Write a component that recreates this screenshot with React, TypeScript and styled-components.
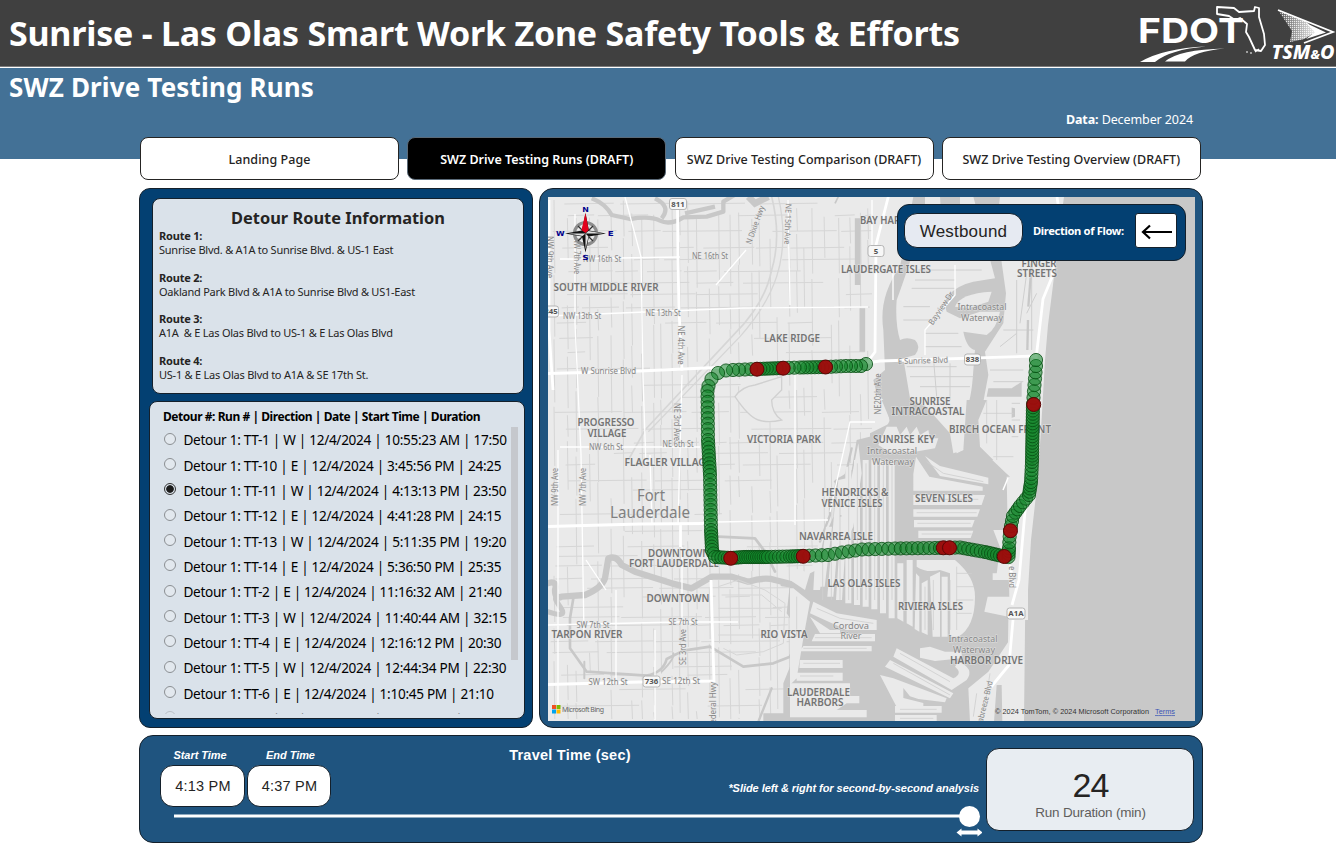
import React from "react";
import styled, { createGlobalStyle, css } from "styled-components";

const Global = createGlobalStyle`
  * { box-sizing: border-box; }
  html, body { margin: 0; padding: 0; background: #fff; overflow: hidden; }
  body { font-family: "Noto Sans", "Open Sans", sans-serif; color: #252423; }
`;

const Page = styled.div`
  width: 1336px;
  height: 845px;
  overflow: hidden;
`;

const TitleBar = styled.header`
  display: flex;
  align-items: center;
  justify-content: space-between;
  height: 68px;
  padding: 0 0 1px 9px;
  background: #404040;
  border-bottom: 1px solid #fff;
  box-shadow: inset 0 -1px 0 #7c7c7c;
`;

const Title = styled.h1`
  margin: 0;
  color: #fff;
  font: 700 34px/48px "Noto Sans", sans-serif;
  letter-spacing: -0.23px;
  white-space: nowrap;
`;

const Band = styled.section`
  display: flex;
  justify-content: space-between;
  height: 91px;
  padding: 0 143px 0 9px;
  background: #437196;
  color: #fff;
`;

const Subtitle = styled.h2`
  margin: 0;
  font: 700 26px/39px "Noto Sans", sans-serif;
  letter-spacing: 0.15px;
`;

const DataNote = styled.div`
  padding-top: 42px;
  font-size: 12.5px;
  line-height: 20px;
  letter-spacing: -0.1px;
`;

const Nav = styled.nav`
  display: flex;
  gap: 8.25px;
  margin: -22px 0 0 140px;
`;

const NavButton = styled.button<{ $active?: boolean }>`
  width: 259px;
  height: 43px;
  padding: 1px 0 0;
  border: 1.5px solid ${(p) => (p.$active ? "#5b6a78" : "#252423")};
  border-radius: 8px;
  background: ${(p) => (p.$active ? "#000" : "#fff")};
  color: ${(p) => (p.$active ? "#fff" : "#252423")};
  font: ${(p) => (p.$active ? 600 : 500)} 12.5px "Noto Sans", sans-serif;
  letter-spacing: ${(p) => (p.$active ? 0 : 0.05)}px;
  white-space: nowrap;
`;

const Main = styled.main`
  display: grid;
  grid-template-columns: 394px 664px;
  column-gap: 6px;
  row-gap: 7px;
  margin: 8px 0 0 139px;
`;

const frame = css`
  border: 1px solid #14202b;
`;

const SidePanel = styled.section`
  ${frame}
  display: flex;
  flex-direction: column;
  gap: 7px;
  height: 540px;
  padding: 9px 8px 8px 9px;
  border-radius: 11px;
  background: #034072;
`;

const InfoCard = styled.article`
  ${frame}
  height: 196px;
  margin: 0 0 0 3px;
  padding: 7px 6px;
  border-radius: 8px;
  background: #dae2ea;
`;

const InfoTitle = styled.h3`
  margin: 0 0 -1px;
  font: 700 16.4px/24px "Noto Sans", sans-serif;
  text-align: center;
`;

const Route = styled.p`
  margin: 0 0 13.1px;
  font-size: 11px;
  line-height: 14.2px;
  letter-spacing: -0.24px;
  white-space: pre;
  b { display: block; letter-spacing: -0.2px; }
`;

const ListCard = styled.article`
  ${frame}
  flex: 1;
  min-height: 0;
  margin-right: -1px;
  padding: 6px 6px 4px 13px;
  border-radius: 8px;
  background: #dae2ea;
  color: #000;
`;

const ListTitle = styled.h4`
  margin: 0 0 1px;
  font: 700 12px/18px "Noto Sans", sans-serif;
  letter-spacing: -0.45px;
  white-space: nowrap;
`;

const RunArea = styled.div`
  display: flex;
  justify-content: space-between;
  height: 287px;
  overflow: hidden;
`;

const Runs = styled.ul`
  margin: 0;
  padding: 0 0 0 1px;
  list-style: none;
`;

const Run = styled.li<{ $faded?: boolean }>`
  display: flex;
  align-items: center;
  gap: 7.5px;
  height: 25.35px;
  font-size: 13.6px;
  letter-spacing: -0.3px;
  white-space: nowrap;
  opacity: ${(p) => (p.$faded ? 0.4 : 1)};
`;

const Radio = styled.i<{ $on?: boolean }>`
  width: 12px;
  height: 12px;
  margin-top: -2px;
  flex: none;
  border: 1px solid ${(p) => (p.$on ? "#333" : "#8b8f93")};
  border-radius: 50%;
  background: ${(p) => (p.$on ? "radial-gradient(#1b1b1b 0 3.4px, #dae2ea 4.2px)" : "#e2e8ee")};
`;

const Thumb = styled.div`
  width: 7px;
  height: 233px;
  background: #c5c8cd;
`;

const MapPanel = styled.section`
  ${frame}
  position: relative;
  height: 540px;
  padding: 8px 7px 7px 8px;
  border-radius: 14px;
  background: #1f547f;
`;

const MapSvg = styled.svg`
  display: block;
  width: 647px;
  height: 524px;
  font-family: "Noto Sans", sans-serif;
`;

const FlowCard = styled.div`
  ${frame}
  position: absolute;
  top: 15px;
  left: 357px;
  display: flex;
  align-items: center;
  width: 289px;
  height: 57px;
  padding: 0 8px 4px 6px;
  border-radius: 12px;
  background: #034072;
`;

const FlowValue = styled.div`
  ${frame}
  width: 119px;
  height: 35px;
  border-radius: 13px;
  background: #e6eaf2;
  font: 17px/35px "Liberation Sans", sans-serif;
  letter-spacing: 0.2px;
  text-align: center;
`;

const FlowLabel = styled.div`
  flex: 1;
  padding-left: 10px;
  color: #fff;
  font: 700 11.2px "Noto Sans", sans-serif;
  letter-spacing: -0.36px;
  white-space: nowrap;
`;

const ArrowBox = styled.div`
  ${frame}
  display: grid;
  place-items: center;
  width: 42px;
  height: 35px;
  border-radius: 3px;
  background: #fff;
`;

const TimePanel = styled.section`
  ${frame}
  grid-column: 1 / 3;
  display: flex;
  justify-content: space-between;
  height: 108px;
  padding: 12px 8px 0 20px;
  border-radius: 14px;
  background: #1f547f;
  font-family: "Liberation Sans", sans-serif;
`;

const TimeLeft = styled.div`
  width: 822px;
`;

const TimeRow = styled.div`
  display: flex;
  gap: 2px;
  height: 58px;
`;

const TimeField = styled.label<{ $width: number; $start?: number; $end?: number }>`
  width: ${(p) => p.$width}px;
  color: #fff;
  font: italic 700 11px/14px "Liberation Sans", sans-serif;
  text-align: center;
  letter-spacing: -0.05px;
  b { display: block; padding: 0 ${(p) => p.$end ?? 0}px 0 ${(p) => p.$start ?? 0}px; }
  span {
    ${frame}
    display: block;
    height: 42px;
    margin-top: 3px;
    padding-left: 1px;
    border-radius: 13px;
    background: #fff;
    color: #252423;
    font: 400 14.5px/40px "Liberation Sans", sans-serif;
    letter-spacing: 0.25px;
  }
`;

const TimeHeading = styled.div`
  width: 240px;
  margin-left: 117px;
  color: #fff;
  font-weight: 700;
  font-size: 14.5px;
  line-height: 14px;
  text-align: center;
  letter-spacing: 0.25px;
`;

const Hint = styled.div`
  align-self: flex-end;
  margin: 0 3px 11px auto;
  color: #fff;
  font: italic 700 11px/14px "Liberation Sans", sans-serif;
  letter-spacing: -0.05px;
  white-space: nowrap;
`;

const Slider = styled.svg`
  display: block;
  width: 822px;
  height: 36px;
`;

const Duration = styled.div`
  ${frame}
  width: 208px;
  height: 83px;
  padding: 18px 0 0 1px;
  border-radius: 13px;
  background: #e8edf2;
  text-align: center;
  strong { display: block; font-weight: 400; font-size: 34px; line-height: 36px; letter-spacing: -1px; }
  span { display: block; color: #605e5c; font-size: 13.5px; line-height: 19px; letter-spacing: -0.2px; }
`;

const Logo = styled.svg`
  width: 206px;
  height: 66px;
  margin-top: 1px;
`;

/* ---------- map data ---------- */

const WATER = "#c8c8c8";
const LAND = "#eaeaea";
const MINOR = "#d6d6d6";

const Tile = ({ x, y, children }: { x: number; y: number; children: React.ReactNode }) => (
  <g transform={`translate(${x} ${y}) scale(.33333)`}>{children}</g>
);

type Label = [text: string, x: number, y: number, width: number, rotate?: number];

const areas: Label[] = [
  ["SOUTH MIDDLE RIVER", 606, 287, 105],
  ["LAKE RIDGE", 792, 338, 56],
  ["PROGRESSO", 606, 422, 57],
  ["VILLAGE", 607, 433, 39],
  ["VICTORIA PARK", 784, 439, 74],
  ["FLAGLER VILLAGE", 668, 462, 87],
  ["BAY HARBOR", 890, 220, 60],
  ["LAUDERGATE ISLES", 886, 269, 90],
  ["FINGER", 1039, 263, 35],
  ["STREETS", 1037, 273, 40],
  ["SUNRISE", 930, 401, 41],
  ["INTRACOASTAL", 928, 411.5, 73],
  ["BIRCH OCEAN FRONT", 1000, 429.5, 102],
  ["SUNRISE KEY", 904, 439.5, 62],
  ["HENDRICKS &", 855, 492.5, 67],
  ["VENICE ISLES", 852, 503, 61],
  ["SEVEN ISLES", 944, 498, 58],
  ["NAVARREA ISLE", 836, 536, 74],
  ["DOWNTOWN", 679, 553, 62],
  ["FORT LAUDERDALE", 674, 563.5, 90],
  ["DOWNTOWN", 678, 598, 63],
  ["LAS OLAS ISLES", 864, 583.5, 73],
  ["RIVIERA ISLES", 930.5, 606.5, 65],
  ["RIO VISTA", 784, 634, 47],
  ["TARPON RIVER", 587, 634, 71],
  ["HARBOR DRIVE", 986.5, 660, 73],
  ["LAUDERDALE", 818.5, 692, 63],
  ["HARBORS", 820, 702.5, 47],
];

const waters: Label[] = [
  ["Intracoastal", 982, 307, 49],
  ["Waterway", 982, 317.5, 42],
  ["Intracoastal", 892, 451, 50],
  ["Waterway", 893, 462, 42],
  ["Cordova", 851, 625.5, 36],
  ["River", 851, 636, 21],
  ["Intracoastal", 973, 639, 49],
  ["Waterway", 974, 650, 42],
];

const streets: Label[] = [
  ["NW 16th St", 602, 259.5, 38],
  ["NE 16th St", 710, 256, 36],
  ["NW 13th St", 582, 316.5, 38],
  ["NE 13th St", 663, 313.5, 35],
  ["W Sunrise Blvd", 608.5, 371.5, 55],
  ["E Sunrise Blvd", 923, 360.5, 50, -2],
  ["NW 6th St", 606, 447.5, 34],
  ["NE 6th St", 678, 444.5, 31],
  ["SW 7th St", 593, 625, 33],
  ["SE 7th St", 683, 622.5, 29],
  ["SW 12th St", 608, 682.5, 39],
  ["SE 12th St", 681, 681, 38],
  ["NE 4th Ave", 680.5, 345, 39, 90],
  ["NE 3rd Ave", 677, 422, 38, 90],
  ["NE 15th Ave", 788, 224, 41, 92],
  ["N Dixie Hwy", 755, 225, 40, -70],
  ["NW 7th Ave", 577, 256, 36, 90],
  ["NW 9th Ave", 549.5, 257, 42, 90],
  ["NW 9th Ave", 555.5, 487, 38, -90],
  ["NW 7th Ave", 583.5, 487, 38, -90],
  ["SE 3rd Ave", 683, 647, 36, -90],
  ["Federal Hwy", 713, 705, 46, -90],
  ["NE20th Ave", 878, 394, 41, -90],
  ["Bayview Dr", 941, 308, 38, -56],
  ["e Blvd", 1012, 577, 22, 90],
  ["Seabreeze Blvd", 984, 705, 50, -76],
];

const MapText = ({ items, size, bold, fill }: { items: Label[]; size: number; bold?: boolean; fill: string }) => (
  <g fontSize={size} fontWeight={bold ? 600 : 400} fill={fill} textAnchor="middle"
     stroke="#eaeaea" strokeWidth={bold ? 1.2 : 1} strokeOpacity={0.75} paintOrder="stroke">
    {items.map(([t, x, y, w, r], i) => (
      <text key={i} transform={`translate(${x} ${y}) rotate(${r ?? 0})`} dy=".36em"
            textLength={w} lengthAdjust="spacingAndGlyphs">{t}</text>
    ))}
  </g>
);

const Shield = ({ x, y, w, label }: { x: number; y: number; w: number; label: string }) => (
  <g>
    <rect x={x - w / 2} y={y - 5.5} width={w} height={11} rx={2.5} fill="#f7f7f7" stroke="#b5b5b5" />
    <text x={x} y={y + 2.8} fontSize={7.8} fontWeight={700} fill="#555" textAnchor="middle">{label}</text>
  </g>
);

/* Small residential streets, broken into blocks of uneven length. */
const blocks = (() => {
  let seed = 7;
  const rnd = () => ((seed = (seed * 16807) % 2147483647) / 2147483647);
  let d = "";
  for (let x = 554; x < 872; x += 7 + rnd() * 7) {
    let y = 200 + rnd() * 20;
    while (y < 718) {
      const len = 18 + rnd() * 60;
      if (rnd() > 0.25) d += `M${x.toFixed(1)} ${y.toFixed(1)}l.8 ${Math.min(len, 719 - y).toFixed(1)}`;
      y += len + rnd() * 8;
    }
  }
  for (let y = 204; y < 716; y += 8 + rnd() * 9) {
    let x = 549 + rnd() * 20;
    while (x < 868) {
      const len = 16 + rnd() * 65;
      if (rnd() > 0.35) d += `M${x.toFixed(1)} ${y.toFixed(1)}l${Math.min(len, 872 - x).toFixed(1)} -.8`;
      x += len + rnd() * 12;
    }
  }
  return d;
})();

/* Drive path: [x, y, distance between samples up to this vertex]. */
const drive: [number, number, number][] = [
  [866, 364, 0], [861, 366, 5.6], [846, 366, 5], [826, 367, 4.8], [800, 367.5, 3.6], [783, 368, 5],
  [757, 369, 3.4], [733, 370, 5.6], [726, 370.5, 6.5], [718, 373, 7.4], [711.5, 379, 7], [708.5, 386, 7], [707.5, 391, 5], [708, 440, 5.2],
  [710, 475, 3.8], [711, 530, 5], [712, 550, 3.6], [715, 557, 3.6], [731, 558, 3.2], [744, 557, 2.6],
  [768, 557, 2.2], [790, 556.5, 3.4], [803, 556, 2.5], [828, 555, 6.4], [842, 552.5, 6.4], [862, 549.5, 6.4],
  [895, 548.5, 7], [935, 548, 5.6], [960, 547.5, 5], [985, 552, 4], [1000, 555.5, 3.4], [1008.5, 557, 3],
  [1009, 548, 3.6], [1010, 531, 5], [1013, 516, 4.8], [1020, 506, 4.6], [1029, 495, 4.4], [1031, 482, 3.6],
  [1032, 462, 4], [1033, 404, 3.2], [1034.5, 385, 6], [1036, 366, 6.3], [1036, 360, 6],
];

const samples = drive.slice(1).flatMap(([x, y, step], i) => {
  const [px, py] = drive[i];
  const n = Math.max(1, Math.round(Math.hypot(x - px, y - py) / step));
  return Array.from({ length: n }, (_, k) => [px + ((x - px) * (k + 1)) / n, py + ((y - py) * (k + 1)) / n]);
});

const stops = [
  [757, 369.2], [783.2, 368.2], [825.5, 367], [1033.7, 404.5], [1010.5, 530.7], [1004.3, 556.5],
  [943.3, 547.8], [949.5, 547.8], [803.2, 556.3], [730.7, 558.3],
];

const Compass = () => (
  <g>
    <circle cx="585.5" cy="233.5" r="11" fill="none" stroke="#8d8d8d" strokeWidth="3.2" />
    <path d="M578 226l15 15M593 226l-15 15" stroke="#333" strokeWidth="1.3" />
    <path d="M585.5 213l3.5 17.5 17 3-17 3-3.5 16-3.5-16-17-3 17-3z" fill="#111" />
    <path d="M585.5 213v20l-4-3z M585.5 213l3.2 17-3.2 3z" fill="#e3001b" />
    <path d="M585.5 233.5h-17l14 2.5zM585.5 233.5v16l3-13zM585.5 233.5h18l-15-2.6z" fill="#ddd" />
    <g fill="#00008b" fontSize="7" fontWeight="900" fontFamily="DejaVu Sans">
      <text x="582.3" y="211.5" textLength="6.6" lengthAdjust="spacingAndGlyphs">N</text>
      <text x="556" y="236" textLength="8.6" lengthAdjust="spacingAndGlyphs">W</text>
      <text x="607.8" y="236" textLength="6" lengthAdjust="spacingAndGlyphs">E</text>
      <text x="582.3" y="259.5" textLength="6.4" lengthAdjust="spacingAndGlyphs">S</text>
    </g>
  </g>
);

const MapView = () => (
  <MapSvg viewBox="548 197 647 524">
    <rect x="548" y="197" width="647" height="524" fill={LAND} />
    <path d={blocks} fill="none" stroke={MINOR} strokeWidth="1" />

    {/* northwest rivers, rail line and lake */}
    <Tile x={545} y={190}>
      <g fill="none" stroke={WATER}>
        <path d="M140 25q40 15 60 50l55 12q60-10 90 5t70-10l70-2 50-15 0-30 50-30M330 25q50 25 20 60M420 70l90-20" strokeWidth="13" strokeLinejoin="round" />
        <path d="M610 20l20 20 40-20" strokeWidth="20" />
        <path d="M938 85v200M952 355v130" strokeWidth="17" />
        <path d="M870 40l10-20" strokeWidth="5" />
      </g>
      <path d="M570 620q20-30 60-35l80-25v40l-30 30q0 40 30 60-40 10-70 0t-70-70z" fill={LAND} stroke="#d0d0d0" strokeWidth="4" />
      <path d="M680 20q30 120 0 220-20 100-110 190L300 720 250 810" fill="none" stroke={MINOR} strokeWidth="5" />
      <path d="M700 20q30 130-5 240-30 90-110 180L310 725" fill="none" stroke={MINOR} strokeWidth="4" />
    </Tile>

    {/* New River and Tarpon River */}
    <Tile x={545} y={455}>
      <g fill="none" stroke={WATER} strokeLinejoin="round" strokeLinecap="round">
        <path d="M8 385q30-10 22 20 0 30 20 20l70-5q50-20 60-50l10-60q25-10 40 20l40 20 110 35 60 15 60-35 60 0 50 15q50-15 80-5l60 15 50 40" strokeWidth="19" />
        <path d="M8 470q60 20 40-10t-15-30" strokeWidth="16" />
        <path d="M520 245l110 5 30 40 30 60M85 430l-10 60 0 90 50 70 180 12q50-10 60-50l50-25 80-12 50 30 50 30 90-10 50-20 30-60 8-140" strokeWidth="8" />
        <path d="M350 650q40-40 35-55M118 620v50" strokeWidth="6" />
        <path d="M780 400l-70-10M640 800l40-100M870 80l30-10 20-90M855 130l0 50-30 80" strokeWidth="7" />
      </g>
      <g fill="none" stroke={MINOR} strokeWidth="3">
        <path d="M520 395l60-20 80 30 60 40-5 120-60 25-80 10-40-20M530 420l120 0 60 50M520 460h190M520 540h180" />
      </g>
    </Tile>

    {/* Intracoastal channel north of Sunrise Blvd */}
    <Tile x={870} y={190}>
      <path d="M130 20h80v70l-30 50q0 100-60 140-40 60-10 120l60 30-10 80q40 30 20 90l60 20 60 20 60 60 30 50v60H0v-80l60-30-10-60-30-30-10-40 35-30-5-120q-15-100 50-190z" fill={WATER} />
      <path d="M165 20L165 60 150 130 120 215Q95 290 80 330 75 400 90 450q20-10 45 0 20 20 0 45l-35 10 20 120q50 30 110 45l30 120q10 25 40 20l20-140 10-160-50-70 90 10 10-200V20z" fill={LAND} />
      <path d="M210 20h60v130l-50 30zM310 20h80l-10 90 28 200-8 90-55 85 10 70-15 80 95 20v25l-95 30-35 100-25 10 5-150q20-40 25-130l5-60q-25-5-35-55l70 10q30-20 40-70l-60 0-60 20-40-20q-10-30 5-50 30-30 75-40l65-10z" fill={WATER} />
      <path d="M255 350q15-40 110-45l-10 30-60 20z" fill={LAND} />
      <g fill="none" stroke="#cfcfcf" strokeWidth="3">
        <path d="M145 240h190M135 270h120M125 295h130M100 350h80M100 390h90M165 430h100M165 470h110M110 530h150M120 560h190M150 590h150M190 500l10 120M240 520v140" />
        <path d="M440 270v220M470 250l-20 150M485 250v230M500 310l-30 60M400 420h90M390 470l50-40M360 540h100M370 575h90M330 640h120M340 690h110M335 740h110M390 630v180M420 630v180" />
      </g>
      <path d="M485 220l-10 130M474 390l-2 90" stroke={WATER} strokeWidth="7" />
      <path d="M355 595h70l30-20v45H350z" fill={WATER} />
    </Tile>

    {/* Las Olas canals and the harbour */}
    <Tile x={790} y={400}>
      <path d="M275 0l25 60-20 40-80 20-15 90-50 30-5 110-30 70-20 90-80 40-10 90 40 60-10 50-40 100 0 90-60 0v30h1000V660H850l-180 0V240L565 140 600 0H480l40 150-30 15-20-90-70-60-100-15z" fill={WATER} />
      <path d="M590 0l-25 60 5 80 80 80 15 10V0zM490 160l-10-60-90-100h140l-10 150z" fill={LAND} />
      <g fill={LAND}>
        <path d="M320 80l10 25 20-25 10 25 20-25 10 25 25-15 5 25 25 0-10 30-60 10h-80l-30-20 25-55z" />
        <path d="M205 130l10 90-25 160-30 60h-20l45-210zM145 240l25-5v110h-35zM140 350l35 0-10 80-25 0z" />
        {Array.from({ length: 9 }, (_, i) => {
          const x = 88 + i * 26;
          const top = [380, 320, 260, 200, 180][i] ?? 180;
          const bottom = [560, 590, 600, 610, 615, 620, 628, 640, 655][i];
          return <path key={i} d={`M${x + (i < 3 ? 20 : 0)} ${top}h18l${i < 3 ? -22 : 0} ${bottom - top}h-18z`} />;
        })}
        <path d="M378 170l40 60 160 30v12H370v-50zM405 168l45 30 145 35v20L450 228zM370 285h215l-10 30H370zM370 328h200l-8 22H370zM372 360h182l-8 22H372zM385 392h165l-8 22H385z" />
        <path d="M322 490h18v175l-18-10zM350 480h18v200l-18-10zM378 520l10 10v165l-14-8zM395 550l18-10v165l-18-8zM420 530l30-15v195h-22zM455 530h18v180h-18z" />
        <path d="M380 480h115q60 50 60 110 0 90-50 120h-25V520l-30-10q-40 10-70-10z" />
        <path d="M0 500l60 20-15 50-45-30zM75 480l30-10-15 100-20 0z" />
        <path d="M10 565l50 40-20 110-20 120-20 20V565zM70 605l70 35 120 20v30H170l-110-50zM60 650l60 40 30 0v10H90zM75 702h180v22H65zM40 738h205v16H30zM30 780h128v24H28zM20 818h138v24H20z" />
        <path d="M0 850h180v38h28v22H170l-30 20h90v22H0z" />
        <path d="M390 745l30-5 45 15h50v20l-80 8-45-10zM320 745l170 90q30-15 5-35l10-15q50 20 25 55l-45 30L310 770zM300 780l190 100-10 15-195-95zM270 825l40 10 160 60-5 12-80-10-25-8-20-25v30l60 15v12h-80z" />
        <path d="M315 918h140v20H315zM315 945h125v20H315z" />
        <path d="M610 390l40 0v60l-30 0v35h50V420l-10-30v500l-10 75H540l-5-100 60-50 60-90v-75l-72-15 10-45h65v-50h-50v-20h50V522l-38 0 10-80z" />
        <path d="M650 230h60l-8 735H600l50-150 10-220-5-120z" />
      </g>
      <g fill="none" stroke="#cfcfcf" strokeWidth="2.5">
        {Array.from({ length: 9 }, (_, i) => <path key={i} d={`M${98 + i * 26} ${[450, 400, 300, 200, 190][i] ?? 190}V600`} />)}
        <path d="M380 298h185M380 338h180M382 370h160M395 402h150M410 185l50 35 120 25M500 500v190M500 520h45M500 560h52M500 600h50M500 640h45M430 540v150M405 560v130M480 540v150" />
        <path d="M80 625l70 30 100 15M75 713h170M40 745h190M40 790h110M30 828h100M10 870h150M330 760l150 85M310 790l170 95M20 590v120M330 928h110M330 955h100M560 880l-10 70M600 820l-20 130M640 420v40M590 0v130M620 0v180M580 40h90M580 90h100M610 170h60" />
      </g>
      <path d="M620 855h15l2 110h-25z" fill={WATER} />
    </Tile>

    {/* Atlantic */}
    <path d="M1064 197L1060 225 1053 285 1048 325 1045 360 1041 430 1039 460 1036 495 1031 540 1028 590 1028 640 1025.5 721H1195V197z" fill={WATER} />

    {/* arterial roads */}
    <g fill="none" stroke="#fff" strokeLinejoin="round">
      <path d="M548 373.5L640 371 705 368 760 366 866 363 880 361 1035 356M677.5 208L678 260 679 310 682 371M549 200V330l4 60M890 190L876 245 875 352 866 364M1057 197l3 20-8 60-9 22-7 60M548 526.5L640 524 705 523.5M711 580L714 682M548 684.5L640 682 714 681M680.5 525V547M1026 500l-7 80-7 25M1010 565l4 22M1013 620l-4 45-18 22" strokeWidth="2.8" />
      <path d="M575 214v110l6 130 3 180M788 200l2 105M548 316l195-8 125-1M625 197l16 60 2 120 3 90M560 447h140M650 455l2 70M682 375l-4 150M560 259l120-2M716 522l112-2M795 360v165M875 422h-25l-20 90M548 625l130-3h60M616 590v90M655 630v90M682 547v75M872 250v-50M955 265v30l-30 35v25M893 300l0-30M716 285l30-35M586 560l20 30M558 450v260" strokeWidth="1.3" />
      <path d="M985 559h30M1008 478l-5 12" strokeWidth="1.5" />
    </g>

    <MapText items={streets} size={8.2} fill="#868686" />
    <MapText items={waters} size={9.4} fill="#858585" />
    <MapText items={areas} size={10} bold fill="#747474" />
    <MapText items={[["Fort", 651, 495.5, 28], ["Lauderdale", 650, 512.5, 80]]} size={15.5} fill="#808080" />

    <Shield x={678} y={204} w={17} label="811" />
    <Shield x={876} y={251} w={16} label="5" />
    <Shield x={551} y={311.5} w={15} label="845" />
    <Shield x={972.5} y={359.5} w={16} label="838" />
    <Shield x={651.5} y={681.5} w={17} label="736" />
    <Shield x={1016} y={613.5} w={18} label="A1A" />

    <g fill="#12852a" fillOpacity="0.55" stroke="#064d12" strokeOpacity="0.8" strokeWidth="1">
      <circle cx="866" cy="364" r="6.6" />
      {samples.map(([x, y], i) => <circle key={i} cx={x} cy={y} r="6.6" />)}
    </g>
    <g fill="#a4070b" fillOpacity="0.93" stroke="#5a0606" strokeWidth="1">
      {stops.map(([x, y], i) => <circle key={i} cx={x} cy={y} r="7" />)}
    </g>

    <Compass />

    <rect x="552" y="705" width="4" height="4" fill="#f25022" />
    <rect x="556.5" y="705" width="4" height="4" fill="#7fba00" />
    <rect x="552" y="709.5" width="4" height="4" fill="#00a4ef" />
    <rect x="556.5" y="709.5" width="4" height="4" fill="#ffb900" />
    <text x="562" y="711.5" fontSize="7" fill="#666" textLength="42">Microsoft Bing</text>
    <g fontFamily="Liberation Sans" fontSize="7.3">
      <text x="995" y="714.3" fill="#333" textLength="154">© 2024 TomTom, © 2024 Microsoft Corporation</text>
      <text x="1155" y="714.3" fill="#3a55b5" textLength="20" textDecoration="underline">Terms</text>
    </g>
  </MapSvg>
);

const Logos = () => (
  <Logo viewBox="1130 0 206 66">
    <defs>
      <pattern id="dots" width="2" height="2" patternUnits="userSpaceOnUse">
        <rect width="1.2" height="1.2" fill="#ddd" />
      </pattern>
      <linearGradient id="fade" x1="0" x2="1">
        <stop offset="0" stopColor="#fff" stopOpacity="0.05" />
        <stop offset="1" stopColor="#fff" stopOpacity="0.9" />
      </linearGradient>
    </defs>
    <text x="1138" y="42" fill="#fff" fontFamily="Inter" fontWeight="700" fontSize="34" textLength="106" lengthAdjust="spacingAndGlyphs">FDOT</text>
    <path d="M1140 61q24-14 66-15.5-36 3-51 15.5zM1165 60.5q14-12 60-13-32 3-40 13z" fill="#fff" />
    <path d="M1217 6l17 1 5 4 15-1 1-4 4 1v9l5 17 1 11-4 6-6-1-6-13-3-5 1-8-7-6-5 2-6-4-12-2z" fill="none" stroke="#fff" strokeWidth="1.8" strokeLinejoin="round" />
    <path d="M1246 51h2M1250 52h2M1255 51l4-3" stroke="#fff" strokeWidth="1.2" />
    <path d="M1278 9l28 11 10 11-12 7-14 3 2-11z" fill="url(#dots)" />
    <path d="M1278 9l28 11 10 11-12 7-14 3 2-11z" fill="url(#fade)" />
    <path d="M1306 38l20-6.5-20-9.5 9 9z" fill="#fff" />
    <path d="M1278 9l55 22-29 11" fill="none" stroke="#fff" strokeWidth="1.8" />
    <text x="1271.5" y="58" fill="#fff" fontFamily="Noto Sans" fontStyle="italic" fontWeight="800" fontSize="19.5" textLength="63" lengthAdjust="spacingAndGlyphs">
      TSM<tspan fontSize="13">&amp;</tspan>O
    </text>
  </Logo>
);

const routes = [
  ["Route 1:", "Sunrise Blvd. & A1A to Sunrise Blvd. & US-1 East"],
  ["Route 2:", "Oakland Park Blvd & A1A to Sunrise Blvd & US1-East"],
  ["Route 3:", "A1A  & E Las Olas Blvd to US-1 & E Las Olas Blvd"],
  ["Route 4:", "US-1 & E Las Olas Blvd to A1A & SE 17th St."],
];

const runs = [
  "TT-1 | W | 12/4/2024 | 10:55:23 AM | 17:50",
  "TT-10 | E | 12/4/2024 | 3:45:56 PM | 24:25",
  "TT-11 | W | 12/4/2024 | 4:13:13 PM | 23:50",
  "TT-12 | E | 12/4/2024 | 4:41:28 PM | 24:15",
  "TT-13 | W | 12/4/2024 | 5:11:35 PM | 19:20",
  "TT-14 | E | 12/4/2024 | 5:36:50 PM | 25:35",
  "TT-2 | E | 12/4/2024 | 11:16:32 AM | 21:40",
  "TT-3 | W | 12/4/2024 | 11:40:44 AM | 32:15",
  "TT-4 | E | 12/4/2024 | 12:16:12 PM | 20:30",
  "TT-5 | W | 12/4/2024 | 12:44:34 PM | 22:30",
  "TT-6 | E | 12/4/2024 | 1:10:45 PM | 21:10",
  "TT-7 | W | 12/4/2024 | 1:37:43 PM | 17:20",
];

export default function App() {
  return (
    <Page>
      <Global />
      <TitleBar>
        <Title>Sunrise - Las Olas Smart Work Zone Safety Tools &amp; Efforts</Title>
        <Logos />
      </TitleBar>
      <Band>
        <Subtitle>SWZ Drive Testing Runs</Subtitle>
        <DataNote><b>Data:</b> December 2024</DataNote>
      </Band>
      <Nav>
        <NavButton>Landing Page</NavButton>
        <NavButton $active>SWZ Drive Testing Runs (DRAFT)</NavButton>
        <NavButton>SWZ Drive Testing Comparison (DRAFT)</NavButton>
        <NavButton>SWZ Drive Testing Overview (DRAFT)</NavButton>
      </Nav>
      <Main>
        <SidePanel>
          <InfoCard>
            <InfoTitle>Detour Route Information</InfoTitle>
            {routes.map(([name, text]) => (
              <Route key={name}><b>{name}</b>{text}</Route>
            ))}
          </InfoCard>
          <ListCard>
            <ListTitle>Detour #: Run # | Direction | Date | Start Time | Duration</ListTitle>
            <RunArea>
              <Runs>
                {runs.map((r, i) => (
                  <Run key={r} $faded={i === 11}>
                    <Radio $on={i === 2} />
                    Detour 1: {r}
                  </Run>
                ))}
              </Runs>
              <Thumb />
            </RunArea>
          </ListCard>
        </SidePanel>
        <MapPanel>
          <MapView />
          <FlowCard>
            <FlowValue>Westbound</FlowValue>
            <FlowLabel>Direction of Flow:</FlowLabel>
            <ArrowBox>
              <svg width="34" height="20" viewBox="0 0 34 20">
                <path d="M33 11H4.500M11 4.500L4 11l7 6.500" fill="none" stroke="#000" strokeWidth="2.2" />
              </svg>
            </ArrowBox>
          </FlowCard>
        </MapPanel>
        <TimePanel>
          <TimeLeft>
            <TimeRow>
              <TimeField $width={85} $end={5}><b>Start Time</b><span>4:13 PM</span></TimeField>
              <TimeField $width={84} $start={3}><b>End Time</b><span>4:37 PM</span></TimeField>
              <TimeHeading>Travel Time (sec)</TimeHeading>
              <Hint>*Slide left &amp; right for second-by-second analysis</Hint>
            </TimeRow>
            <Slider viewBox="0 0 822 36">
              <rect x="14" y="8.5" width="800" height="3" fill="#fff" />
              <circle cx="809.5" cy="10.5" r="10.500" fill="#fff" />
              <path d="M796.5 26.500l5-4v2h16v-2l5 4-5 4v-2h-16v2z" fill="#fff" />
            </Slider>
          </TimeLeft>
          <Duration>
            <strong>24</strong>
            <span>Run Duration (min)</span>
          </Duration>
        </TimePanel>
      </Main>
    </Page>
  );
}
